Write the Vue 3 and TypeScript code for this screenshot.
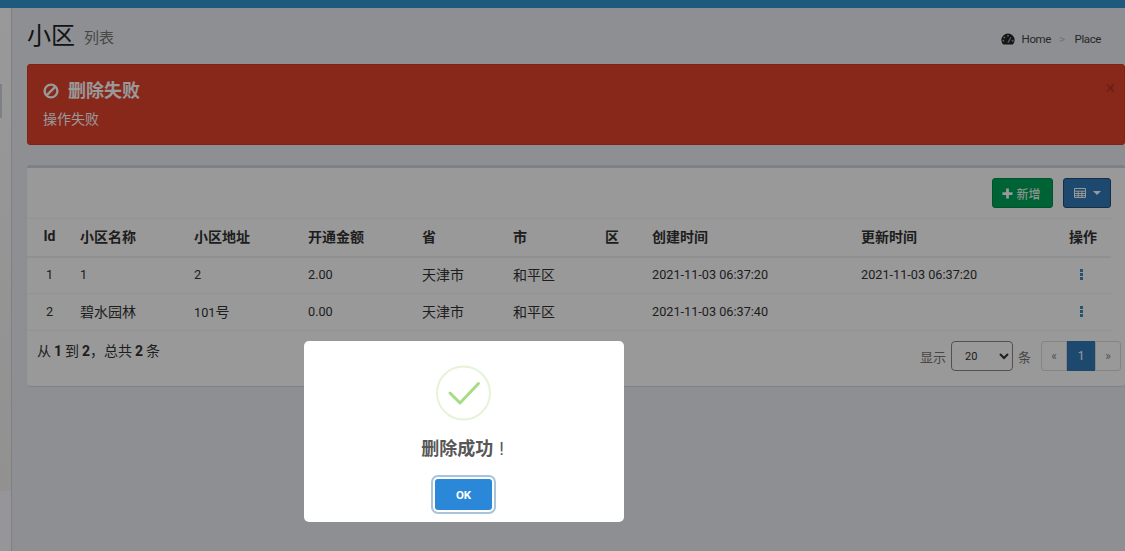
<template>
  <div class="page">
    <div class="topbar"></div>
    <div class="body">
      <aside class="side">
        <div class="side-tab"></div>
      </aside>
      <main class="content">
        <header class="head">
          <h1>小区<small>列表</small></h1>
          <div class="crumb">
            <svg class="gauge" viewBox="0 0 14 12" width="14" height="12">
              <path d="M7 0.5A6.6 6.6 0 0 0 0.4 7.1c0 1.5.5 2.8 1.3 3.9.2.3.5.4.8.4h9c.3 0 .6-.1.8-.4.8-1.1 1.3-2.4 1.3-3.9A6.6 6.6 0 0 0 7 .5z" fill="#222" />
              <circle cx="7" cy="2.8" r="1" fill="#999" />
              <circle cx="3.4" cy="4.4" r="1" fill="#999" />
              <circle cx="2.4" cy="7.8" r="1" fill="#999" />
              <circle cx="11.6" cy="7.8" r="1" fill="#999" />
              <path d="M6.2 9.6 9.6 3.8l.8.4L8 9.8z" fill="#999" />
            </svg>
            <span class="crumb-home">Home</span>
            <span class="crumb-sep">&gt;</span>
            <span>Place</span>
          </div>
        </header>

        <div class="alert">
          <span class="alert-close">×</span>
          <h4>
            <svg viewBox="0 0 16 16" width="16" height="16">
              <circle cx="8" cy="8" r="6.4" fill="none" stroke="currentColor" stroke-width="2.4" />
              <path d="M3.8 12.2 12.2 3.8" stroke="currentColor" stroke-width="2.4" />
            </svg>
            删除失败
          </h4>
          <p>操作失败</p>
        </div>

        <section class="box">
          <div class="toolbar">
            <button class="btn btn-add">
              <svg viewBox="0 0 12 12" width="11" height="11"><path d="M4.5 0.5h3v4h4v3h-4v4h-3v-4h-4v-3h4z" fill="currentColor" /></svg>
              新增
            </button>
            <button class="btn btn-cols">
              <svg viewBox="0 0 12 10" width="12" height="10">
                <path d="M.5.5h11v9H.5zM.5 3.2h11M.5 5.5h11M.5 7.6h11M4.2 3.2v6.3M7.9 3.2v6.3" fill="none" stroke="currentColor" />
              </svg>
              <i class="caret"></i>
            </button>
          </div>

          <table>
            <thead>
              <tr>
                <th v-for="c in columns" :key="c.label" :class="c.cls" :style="{ width: c.width + 'px' }">{{ c.label }}</th>
              </tr>
            </thead>
            <tbody>
              <tr v-for="r in rows" :key="r.id">
                <td class="center num">{{ r.id }}</td>
                <td><span class="num">{{ r.nameNum }}</span>{{ r.name }}</td>
                <td><span class="num">{{ r.address }}</span>{{ r.suffix }}</td>
                <td class="num">{{ r.amount }}</td>
                <td>{{ r.province }}</td>
                <td>{{ r.city }}</td>
                <td></td>
                <td class="num">{{ r.created }}</td>
                <td class="num">{{ r.updated }}</td>
                <td class="ops"><span class="dots"><i></i><i></i><i></i></span></td>
              </tr>
            </tbody>
          </table>

          <footer class="foot">
            <div class="summary">从 <b>1</b> 到 <b>2</b>，总共 <b>2</b> 条</div>
            <div class="pager">
              <span class="muted">显示</span>
              <select class="size">
                <option>20</option>
              </select>
              <span class="muted">条</span>
              <ul>
                <li>«</li>
                <li class="active">1</li>
                <li>»</li>
              </ul>
            </div>
          </footer>
        </section>
      </main>
    </div>

    <div class="overlay">
      <div class="modal">
        <div class="check">
          <svg viewBox="0 0 56 56" width="56" height="56">
            <circle cx="27.5" cy="28" r="26.5" fill="none" stroke="#e5f3d9" stroke-width="2" />
            <path d="M14 28 24 38 42.5 18.5" fill="none" stroke="#a5dc86" stroke-width="3" stroke-linecap="round" stroke-linejoin="round" />
          </svg>
        </div>
        <h2>删除成功<span class="bang">!</span></h2>
        <button class="ok">OK</button>
      </div>
    </div>
  </div>
</template>

<script setup lang="ts">
const columns = [
  { label: 'Id', width: 45, cls: 'center' },
  { label: '小区名称', width: 114 },
  { label: '小区地址', width: 114 },
  { label: '开通金额', width: 114 },
  { label: '省', width: 91 },
  { label: '市', width: 92 },
  { label: '区', width: 47 },
  { label: '创建时间', width: 209 },
  { label: '更新时间', width: 194 },
  { label: '操作', width: 64, cls: 'ops-head' },
];

const rows = [
  { id: 1, nameNum: '1', name: '', address: '2', suffix: '', amount: '2.00', province: '天津市', city: '和平区', created: '2021-11-03 06:37:20', updated: '2021-11-03 06:37:20' },
  { id: 2, nameNum: '', name: '碧水园林', address: '101', suffix: '号', amount: '0.00', province: '天津市', city: '和平区', created: '2021-11-03 06:37:40', updated: '' },
];
</script>

<style>
html, body { margin: 0; overflow: hidden; }
</style>

<style scoped>
.page {
  position: relative;
  width: 1125px;
  height: 551px;
  overflow: hidden;
  background: #eceff4;
  color: #333;
  font-family: Roboto, "Noto Sans CJK SC", sans-serif;
  font-size: 14px;
}
.topbar { height: 8px; background: #3396d2; }
.body { display: flex; height: 543px; }
.side {
  position: relative;
  width: 11px;
  flex: none;
  border-right: 1px solid #d2d6de;
  background: linear-gradient(#fff 0, #f3f2f1 483px, #fafbfd 483px);
}
.side-tab { position: absolute; left: 0; top: 76px; width: 2px; height: 34px; background: #d2d6de; }
.content { flex: 1; min-width: 0; padding: 0 0 0 15px; }
.head { display: flex; justify-content: space-between; align-items: flex-start; height: 56px; }
h1 { margin: 14px 0 0; font-size: 24px; font-weight: 400; line-height: 28px; color: #222; }
h1 small { position: relative; top: -1px; margin-left: 9px; font-size: 15px; color: #777; }
.crumb { display: flex; align-items: center; margin: 24px 24px 0 0; font-size: 11.5px; letter-spacing: -.4px; line-height: 14px; color: #444; }
.gauge { margin-right: 7px; }
.crumb-sep { margin: 0 10px 0 8px; color: #bbb; }
.alert {
  position: relative;
  height: 81px;
  box-sizing: border-box;
  padding: 16px 15px 15px;
  border: 1px solid #d73925;
  border-radius: 3px;
  background: #e2432e;
  color: #fff;
}
.alert h4 { display: flex; align-items: center; gap: 9px; margin: 0 0 8px; font-size: 18px; line-height: 20px; font-weight: 700; }
.alert p { margin: 0; font-size: 14px; line-height: 20px; }
.alert-close { position: absolute; right: 9px; top: 13px; font-size: 18px; line-height: 20px; color: #000; opacity: .2; }
.box {
  margin-top: 20px;
  height: 221px;
  box-sizing: border-box;
  border-top: 3px solid #d2d6de;
  border-radius: 3px;
  background: #fff;
  box-shadow: 0 1px 1px rgba(0, 0, 0, .1);
}
.toolbar { display: flex; justify-content: flex-end; gap: 10px; height: 50px; padding: 10px 14px 0 0; box-sizing: border-box; }
.btn {
  display: flex;
  align-items: center;
  justify-content: center;
  height: 30px;
  padding: 0;
  border: 1px solid;
  border-radius: 3px;
  color: #fff;
  font: inherit;
  font-size: 12px;
}
.btn-add { width: 61px; gap: 3px; padding-right: 2px; box-sizing: border-box; background: #00a65a; border-color: #008d4c; }
.btn-cols { width: 48px; gap: 7px; background: #337ab7; border-color: #204d74; }
.caret { width: 0; height: 0; border-top: 4px solid #fff; border-left: 4px solid transparent; border-right: 4px solid transparent; }
table { width: 1084px; border-collapse: collapse; table-layout: fixed; font-size: 14px; border-top: 1px solid #f4f4f4; }
th { height: 38px; padding: 0 8px 2px; text-align: left; font-weight: 700; color: #333; border-bottom: 2px solid #f0f0f0; box-sizing: border-box; }
td { height: 37px; padding: 0 8px 2px; border-bottom: 1px solid #f4f4f4; color: #333; box-sizing: border-box; }
.num { font-size: 12.7px; }
th.center, td.center { text-align: center; }
th.ops-head { padding: 0 0 2px 22px; }
.ops { padding: 0 0 0 33px; }
.dots { display: flex; flex-direction: column; gap: 1px; margin-top: -2px; }
.dots i { width: 3px; height: 3px; background: #3c8dbc; }
.foot { display: flex; justify-content: space-between; padding: 0 4px 0 10px; }
.summary { margin-top: 10px; font-size: 14px; line-height: 20px; word-spacing: -0.5px; }
.pager { display: flex; align-items: center; margin-top: 10px; font-size: 13px; }
.muted { color: #777; }
.size { width: 62px; height: 30px; margin: 0 5px; padding: 0 0 0 9px; border: 1px solid #888; border-radius: 4px; background: #fff; color: #333; font-family: inherit; font-size: 11px; }
ul { display: flex; margin: 0 0 0 10px; padding: 0; list-style: none; }
li { width: 26px; height: 30px; line-height: 29px; text-align: center; box-sizing: border-box; border: 1px solid #ddd; background: #fff; color: #888; font-size: 12px; }
li:first-child { border-radius: 3px 0 0 3px; }
li:last-child { border-radius: 0 3px 3px 0; }
li.active { width: 28px; background: #337ab7; border-color: #337ab7; color: #fff; }
.overlay { position: absolute; inset: 0; background: rgba(0, 0, 0, .4); }
.modal {
  position: absolute;
  left: 304px;
  top: 341px;
  width: 320px;
  height: 181px;
  border-radius: 5px;
  background: #fff;
  text-align: center;
}
.check { height: 56px; margin-top: 24px; line-height: 0; }
h2 { margin: 11px 0 0; font-size: 18px; line-height: 34px; font-weight: 700; color: #575757; }
.bang { margin: 0 3px 0 6px; font-weight: 400; }
.ok {
  display: block;
  width: 57px;
  height: 31px;
  margin: 13px 0 0 131px;
  padding: 0;
  border: none;
  border-radius: 3px;
  background: #2b88d8;
  box-shadow: 0 0 0 2px #fff, 0 0 0 4px #a8c3dc;
  color: #fff;
  font-family: Roboto, sans-serif;
  font-size: 11.5px;
  font-weight: 700;
}
</style>
